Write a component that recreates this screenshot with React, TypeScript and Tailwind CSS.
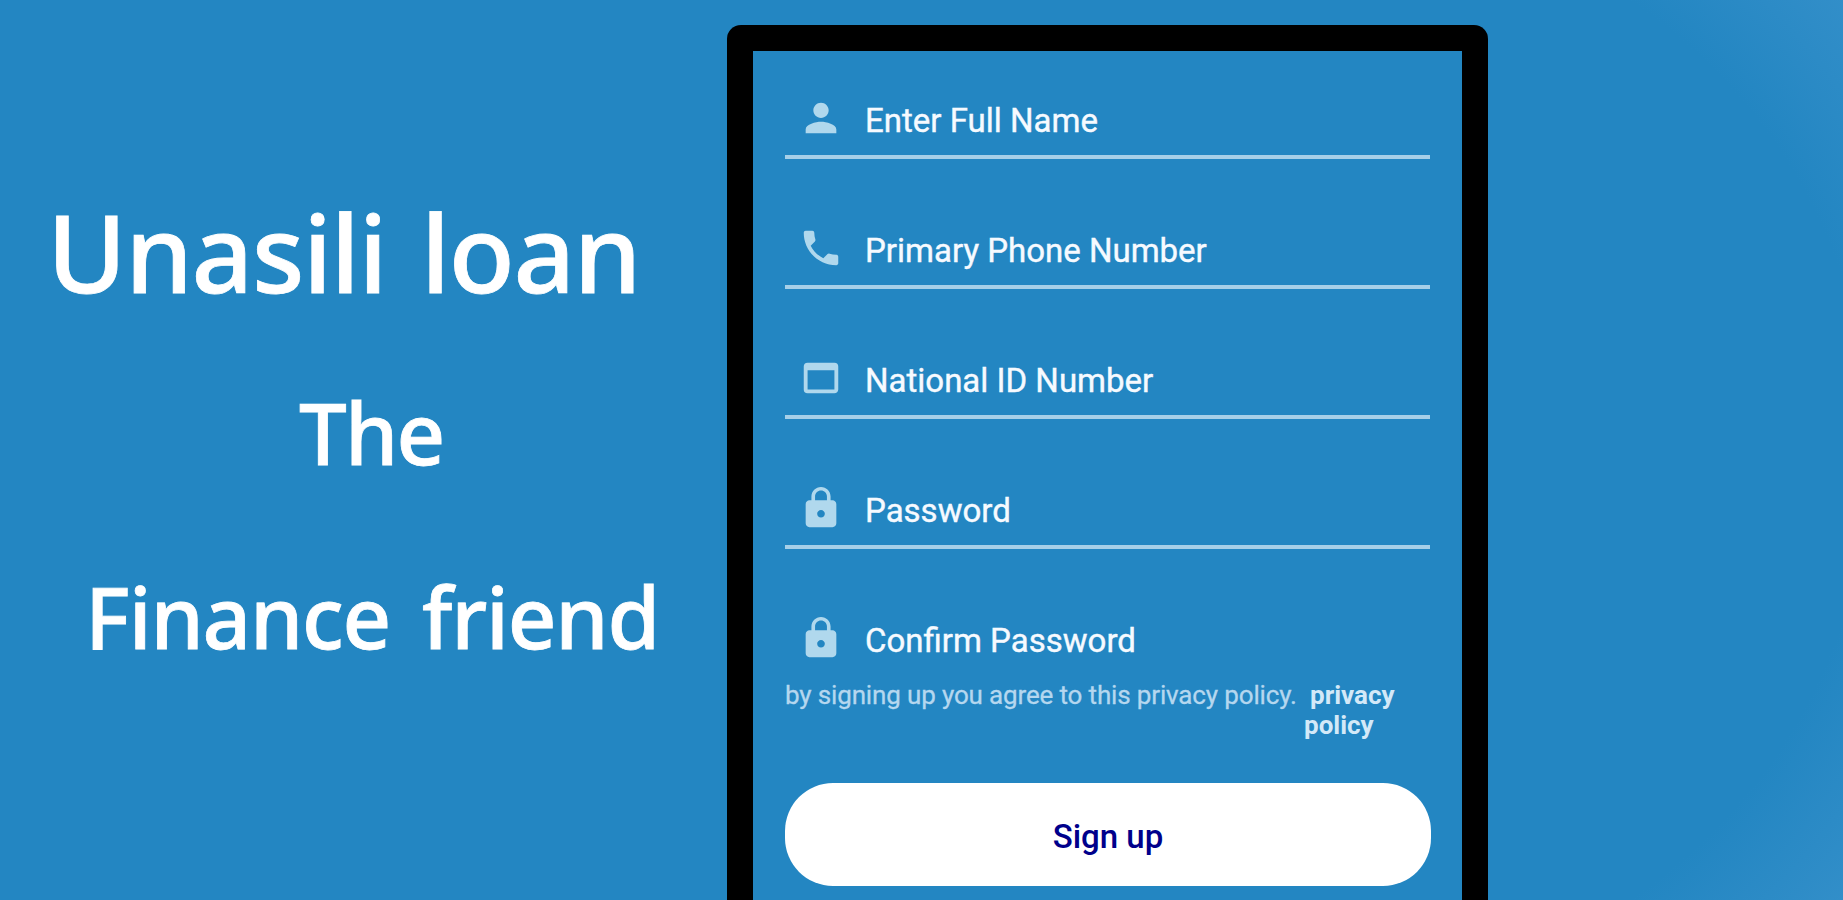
// src/App.tsx
import { MdLock, MdPerson, MdPhone, MdWebAsset } from 'react-icons/md';

const fields = [
  { label: 'Enter Full Name', icon: MdPerson },
  { label: 'Primary Phone Number', icon: MdPhone },
  { label: 'National ID Number', icon: MdWebAsset },
  { label: 'Password', icon: MdLock },
  { label: 'Confirm Password', icon: MdLock },
];

const Tagline = () => {
  return (
    <div className="w-[727px] shrink-0 pt-[177px] font-['Noto_Sans','Open_Sans',sans-serif] font-medium text-white whitespace-nowrap [-webkit-text-stroke:0.8px_white]">
      <h1 className="pl-[47px] text-[108px] leading-[150px] tracking-[-1.4px] [word-spacing:8px]">Unasili loan</h1>
      <p className="mt-[43px] pl-[299px] text-[85px] leading-[124px] tracking-[-1.8px]">The</p>
      <p className="mt-[60px] pl-[85px] text-[85px] leading-[124px] tracking-[-1.2px] [word-spacing:11px]">Finance friend</p>
    </div>
  );
};

const Field = ({ label, icon: Icon, last }) => {
  return (
    <div className={last ? 'h-[80px]' : 'h-[130px]'}>
      <div className={last ? 'flex h-[80px] pl-[13px]' : 'flex h-[80px] border-b-4 border-[#a6cfe8] pl-[13px]'}>
        <Icon className="mt-[16px] size-[46px] text-[#b0d8ed]" />
        <span className="ml-[21px] mt-[20px] text-[33px] leading-[44px] text-[#f6faff] [-webkit-text-stroke:0.4px_#f6faff]">
          {label}
        </span>
      </div>
    </div>
  );
};

const SignupForm = () => {
  return (
    <div className="h-[875px] w-[761px] shrink-0 rounded-t-[14px] bg-black px-[26px] pt-[26px]">
      <div className="h-full bg-[#2386c2] px-[32px] pt-[28px] font-['Roboto',sans-serif] whitespace-nowrap">
        {fields.map((field, index) => (
          <Field key={field.label} {...field} last={index === fields.length - 1} />
        ))}

        <div className="mt-[1px] flex text-[26px] leading-[30px] text-[#b5d7ef]">
          <span className="w-[519px] tracking-[-0.15px] [-webkit-text-stroke:0.3px_#b5d7ef]">by signing up you agree to this privacy policy.</span>
          <a className="font-bold text-[#d3e9f8]">
            <span className="block pl-[6px]">privacy</span>
            <span className="block">policy</span>
          </a>
        </div>

        <button className="mt-[43px] h-[103px] w-[646px] rounded-[48px] bg-white pt-[5px] text-[33px] font-medium text-[#00008b]">
          Sign up
        </button>
      </div>
    </div>
  );
};

export default function App() {
  return (
    <main className="flex h-[900px] w-[1843px] items-end overflow-hidden bg-[#2386c2] bg-[radial-gradient(circle_at_0px_450px,#2386c2_540px,#3590ca_710px)] bg-[length:513px_900px] bg-right bg-no-repeat">
      <div className="h-full">
        <Tagline />
      </div>
      <SignupForm />
    </main>
  );
}
